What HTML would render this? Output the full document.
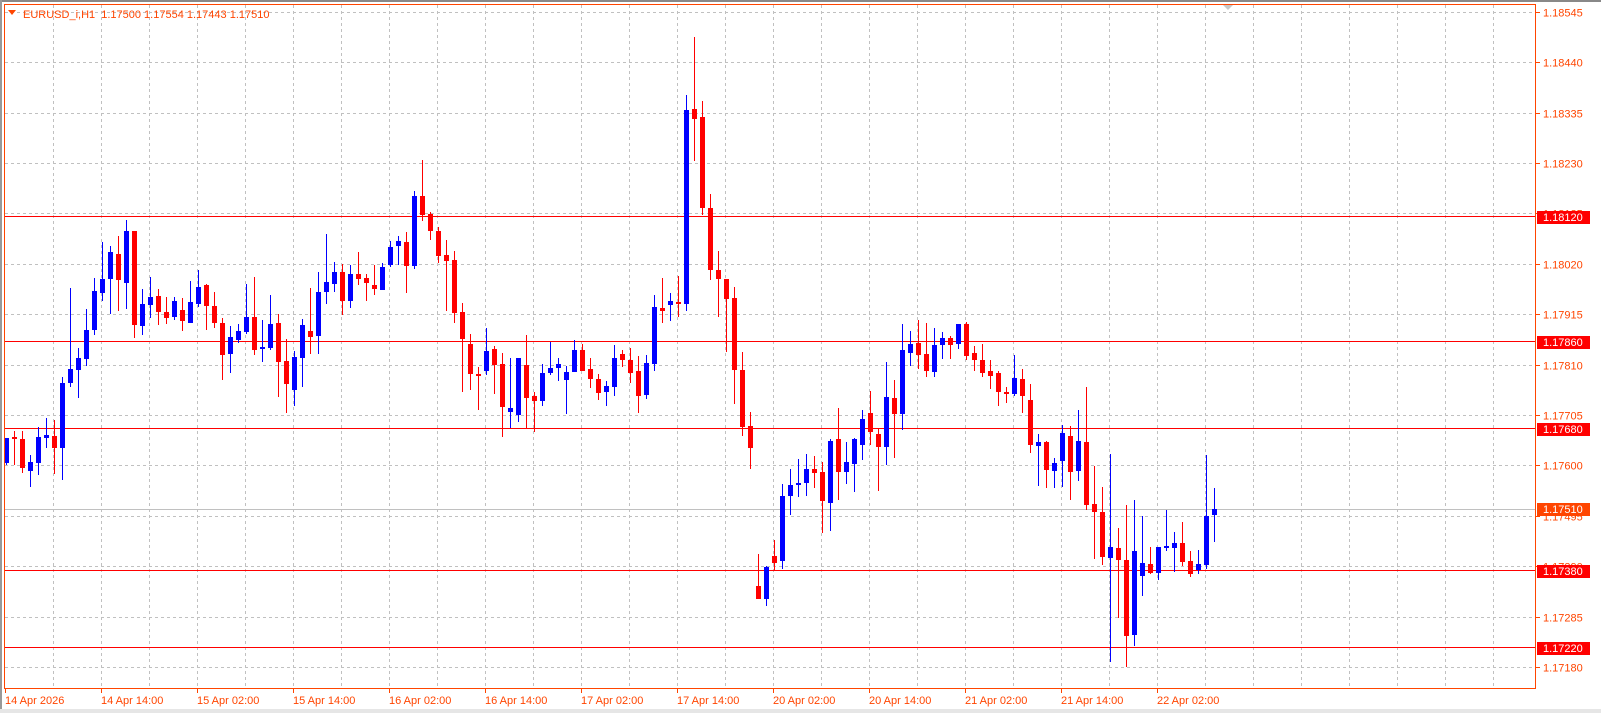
<!DOCTYPE html>
<html><head><meta charset="utf-8">
<style>
html,body{margin:0;padding:0;background:#fff;width:1601px;height:713px;overflow:hidden}
svg{display:block}
text{font-family:"Liberation Sans",sans-serif;font-size:11px}
</style></head>
<body>
<svg id="c" width="1601" height="713" xmlns="http://www.w3.org/2000/svg">
<rect x="0" y="0" width="1601" height="713" fill="#fff"/>
<rect x="0" y="0" width="1601" height="2" fill="#888"/>
<rect x="0" y="0" width="2" height="713" fill="#999"/>
<rect x="0" y="709" width="1601" height="4" fill="#e6e6e6"/>
<g id="grid" stroke="#c0c0c0" stroke-width="1" stroke-dasharray="3,3" shape-rendering="crispEdges"></g>
<g id="lines" shape-rendering="crispEdges"></g>
<g id="candles" shape-rendering="crispEdges"></g>
<rect x="4.5" y="4.5" width="1531" height="684" fill="none" stroke="#ff4500" stroke-width="1" shape-rendering="crispEdges"/>
<g id="axis" fill="#ff4500"></g>
<polygon points="8,10 16,10 12,15" fill="#ff4500"/>
<text x="23" y="18" fill="#ff4500">EURUSD_i,H1 &#160;1.17500 1.17554 1.17443 1.17510</text>
<polygon points="1223,5 1233,5 1228,10" fill="#c8c8c8"/>
</svg>
<script>
var NS="http://www.w3.org/2000/svg";
function el(p,t,a,txt){var e=document.createElementNS(NS,t);for(var k in a)e.setAttribute(k,a[k]);if(txt)e.textContent=txt;p.appendChild(e);return e;}
var grid=document.getElementById('grid'),lines=document.getElementById('lines'),cg=document.getElementById('candles'),ax=document.getElementById('axis');
function Y(p){return 667-(p-1.17180)*48000;}
var levels=[1.18545,1.18440,1.18335,1.18230,1.18125,1.18020,1.17915,1.17810,1.17705,1.17600,1.17495,1.17390,1.17285,1.17180];
levels.forEach(function(p){var y=Math.round(Y(p))+0.5;
 el(grid,'line',{x1:5,x2:1535,y1:y,y2:y});
 el(ax,'rect',{x:1536,y:y-0.5,width:4,height:1});
 el(ax,'text',{x:1543,y:y+4,fill:'#ff4500'},p.toFixed(5));});
for(var k=1;k<=31;k++){var x=5+48*k+0.5;el(grid,'line',{x1:x,x2:x,y1:5,y2:688});}
var dates=["14 Apr 2026","14 Apr 14:00","15 Apr 02:00","15 Apr 14:00","16 Apr 02:00","16 Apr 14:00","17 Apr 02:00","17 Apr 14:00","20 Apr 02:00","20 Apr 14:00","21 Apr 02:00","21 Apr 14:00","22 Apr 02:00"];
dates.forEach(function(d,i){var x=5+96*i;el(ax,'rect',{x:x,y:689,width:1,height:4});el(ax,'text',{x:x,y:704,fill:'#ff4500'},d);});
[[217,'1.18120'],[342,'1.17860'],[429,'1.17680'],[571,'1.17380'],[648,'1.17220']].forEach(function(l){
 el(lines,'rect',{x:5,y:l[0]-1,width:1530,height:1,fill:'#ff0000'});});
el(lines,'rect',{x:5,y:509,width:1530,height:1,fill:'#c0c0c0'});
var C=[
[438,463,438,465,'b'],[437,439,431,465,'r'],[439,468,431,473,'r'],[462,471,455,487,'b'],[437,463,427,475,'b'],[435,438,418,448,'b'],[436,448,420,474,'r'],[383,448,377,480,'b'],[369,383,288,387,'b'],[358,370,348,398,'b'],
[330,359,309,366,'b'],[291,330,278,335,'b'],[279,293,242,301,'b'],[252,279,246,314,'b'],[254,280,236,311,'r'],[231,283,220,309,'b'],[231,325,231,338,'r'],[304,326,289,335,'b'],[297,305,277,318,'b'],[296,312,289,325,'r'],
[312,318,297,324,'r'],[301,317,297,320,'b'],[310,321,298,331,'r'],[302,323,281,323,'b'],[287,304,270,307,'b'],[285,306,284,330,'r'],[306,323,292,328,'r'],[323,355,318,380,'r'],[337,354,326,373,'b'],[331,340,324,343,'b'],
[317,332,284,334,'b'],[317,350,277,355,'r'],[347,349,320,362,'b'],[324,348,295,350,'b'],[323,362,314,397,'r'],[361,384,339,413,'r'],[357,390,351,406,'b'],[325,358,319,387,'b'],[331,337,288,354,'r'],[292,336,272,354,'b'],
[282,292,234,304,'b'],[272,284,262,292,'b'],[272,301,264,315,'r'],[274,301,265,308,'b'],[274,279,252,285,'r'],[278,283,274,301,'r'],[285,289,265,295,'r'],[267,290,263,290,'b'],[247,265,241,267,'b'],[241,246,236,265,'b'],
[242,266,232,293,'r'],[196,266,191,269,'b'],[196,215,160,221,'r'],[214,231,212,240,'r'],[231,256,227,263,'r'],[255,261,240,311,'r'],[260,313,251,323,'r'],[312,339,303,392,'r'],[344,374,334,390,'r'],[374,376,367,410,'r'],
[351,371,328,375,'b'],[349,365,346,394,'r'],[364,407,353,437,'r'],[408,412,358,428,'b'],[358,415,358,422,'b'],[365,398,335,428,'r'],[396,401,392,432,'r'],[373,401,364,406,'b'],[368,373,342,375,'b'],[364,368,358,381,'b'],
[372,380,366,414,'b'],[350,372,340,372,'b'],[350,371,344,371,'r'],[369,379,358,388,'r'],[379,393,374,400,'r'],[386,392,381,406,'b'],[358,387,345,396,'b'],[354,360,350,367,'r'],[360,373,348,383,'r'],[371,396,356,413,'r'],
[363,395,355,399,'b'],[307,364,295,371,'b'],[308,311,278,323,'r'],[301,305,293,321,'b'],[302,304,276,317,'r'],[110,304,95,311,'b'],[109,119,37,161,'r'],[117,208,101,215,'r'],[208,270,194,280,'r'],[270,279,251,317,'r'],
[279,299,279,352,'r'],[298,370,287,404,'r'],[370,427,352,436,'r'],[426,448,412,469,'r'],[586,599,554,599,'r'],[567,599,566,606,'b'],[556,563,540,571,'r'],[496,561,484,569,'b'],[485,496,469,515,'b'],[483,485,459,497,'b'],
[469,483,454,496,'b'],[469,473,456,488,'r'],[472,501,462,533,'r'],[441,503,439,531,'b'],[439,472,408,500,'r'],[462,472,442,484,'b'],[439,464,438,492,'b'],[419,445,410,460,'b'],[413,432,391,445,'r'],[434,447,429,491,'r'],
[397,447,362,465,'b'],[398,414,380,458,'r'],[350,414,324,430,'b'],[344,353,331,366,'b'],[343,355,320,369,'r'],[354,371,323,377,'r'],[345,372,328,377,'b'],[338,345,332,359,'b'],[338,345,336,359,'r'],[324,344,324,349,'b'],
[324,356,322,360,'r'],[353,360,346,371,'r'],[360,373,344,377,'r'],[371,376,360,389,'r'],[373,392,371,406,'r'],[392,394,387,403,'r'],[378,394,355,396,'b'],[379,396,369,413,'r'],[400,445,384,453,'r'],[442,446,434,486,'b'],
[442,470,441,488,'r'],[463,471,458,488,'b'],[433,461,425,487,'b'],[436,472,426,500,'r'],[441,471,410,481,'b'],[442,505,387,510,'r'],[504,512,466,559,'r'],[512,557,487,565,'r'],[547,558,454,662,'b'],[548,560,528,618,'r'],
[560,636,505,667,'r'],[551,635,500,646,'b'],[563,576,516,596,'b'],[564,573,547,574,'r'],[547,573,547,580,'b'],[546,548,510,551,'b'],[543,548,532,572,'b'],[543,562,522,566,'r'],[561,574,551,577,'r'],[564,570,550,574,'b'],
[516,565,455,569,'b'],[509,515,488,542,'b']
];
C.forEach(function(c,i){var cx=Math.round(5.5+8*i);var col=c[4]=='b'?'#0000ff':'#ff0000';
 el(cg,'rect',{x:cx,y:c[2],width:1,height:Math.max(1,c[3]-c[2]),fill:col});
 el(cg,'rect',{x:cx-2,y:c[0],width:5,height:Math.max(2,c[1]-c[0]),fill:col});});
function box(y,t,col){el(ax,'rect',{x:1537,y:y-6,width:53,height:13,fill:col});el(ax,'text',{x:1543,y:y+4,fill:'#fff'},t);}
box(217,'1.18120','#ff0000');box(342,'1.17860','#ff0000');box(429,'1.17680','#ff0000');box(571,'1.17380','#ff0000');box(648,'1.17220','#ff0000');box(509,'1.17510','#ff4500');
</script>
</body></html>
